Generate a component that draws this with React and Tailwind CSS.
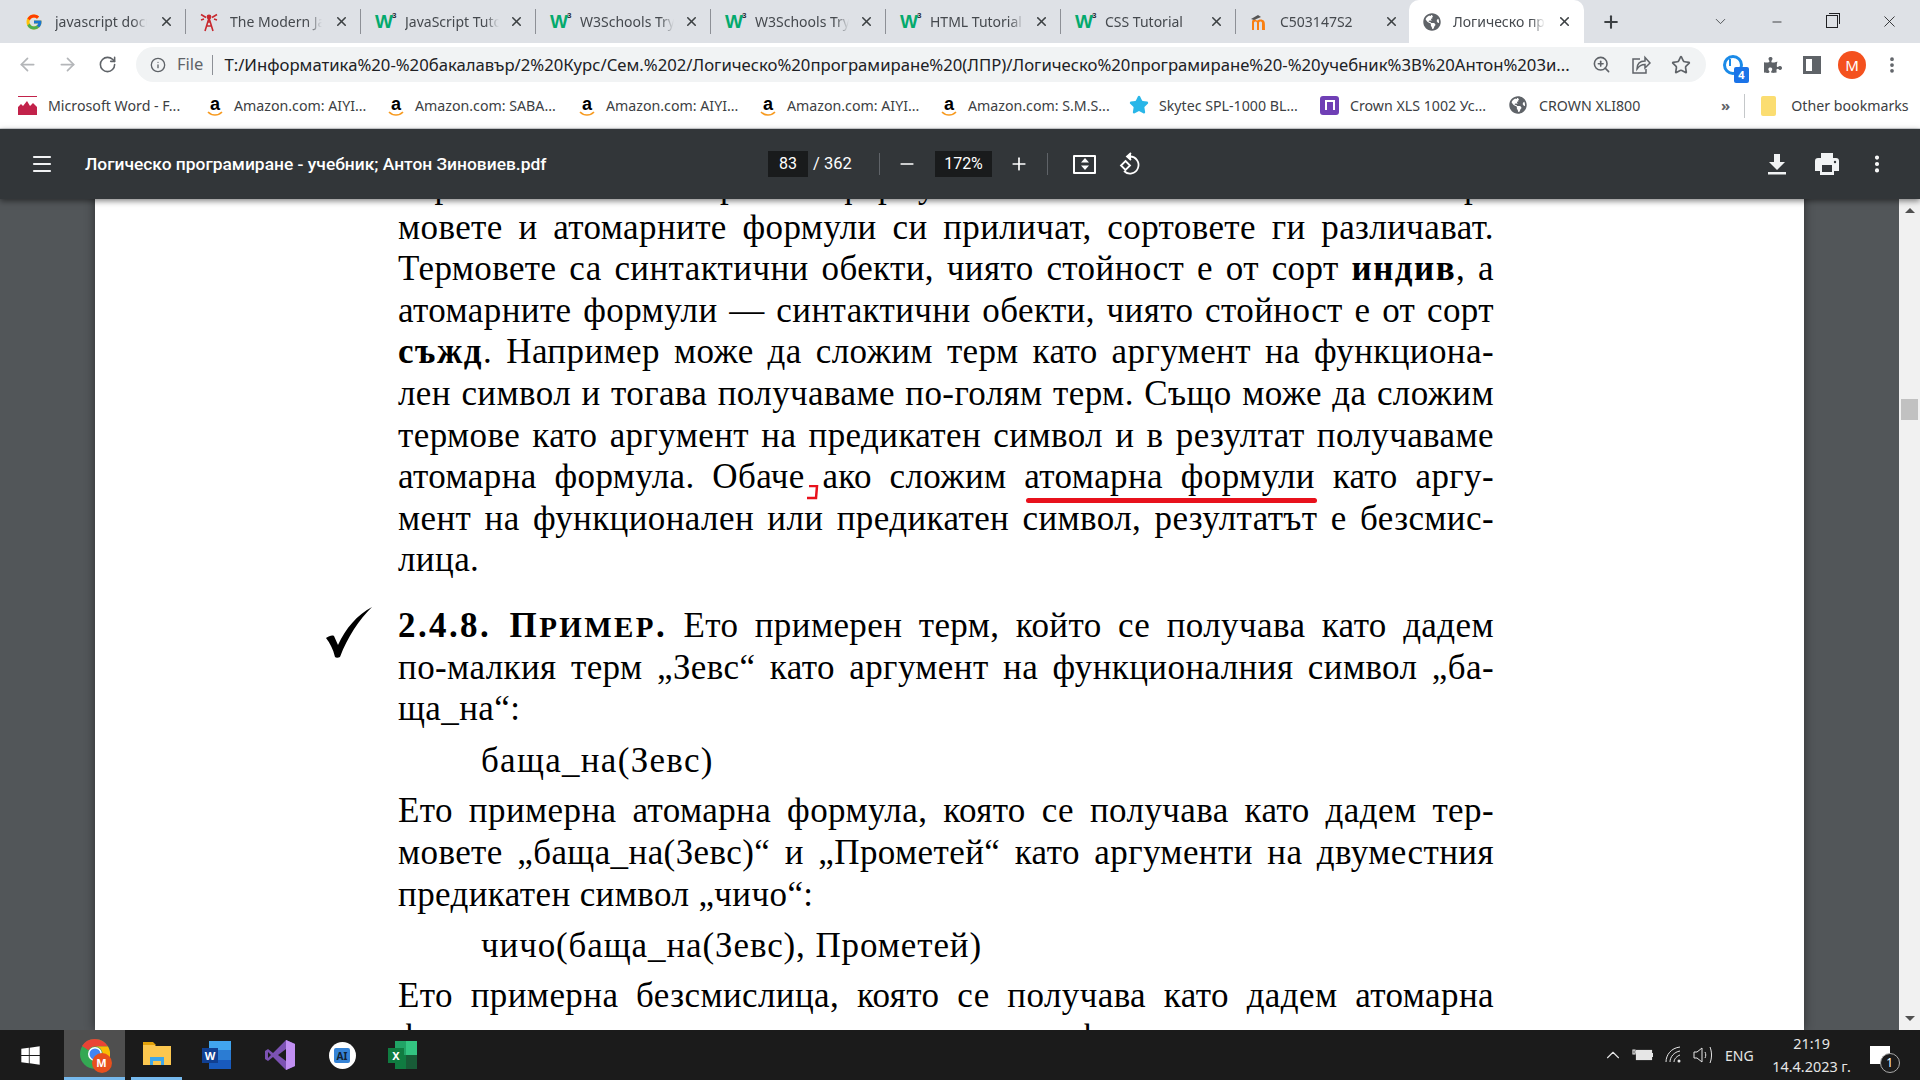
import {
  ArrowLeft,
  ArrowRight,
  RotateCw,
  Info,
  ZoomIn,
  Star,
  Plus,
  Minus,
  X,
  ChevronDown,
  ChevronUp,
  Menu,
  EllipsisVertical,
} from 'lucide-react';
import { FcGoogle } from 'react-icons/fc';
import { FaGlobeAmericas, FaPuzzlePiece, FaWindows } from 'react-icons/fa';

function W3() {
  return (
    <span className="relative w-[20px] h-[18px] flex-none font-['Liberation_Sans',sans-serif] font-bold text-[19px] leading-[18px] text-[#04aa6d]">
      W<span className="absolute left-[17px] -top-[2px] text-[8px] leading-[10px] text-[#282a35]">3</span>
    </span>
  );
}

function Tower() {
  return (
    <svg width="18" height="20" viewBox="0 0 18 20" fill="none" stroke="#c8282e" strokeWidth="1.6" className="flex-none">
      <path d="M9 6 5 19M9 6l4 13M6.500 14h5M7.500 10h3M1 2.500l5 3M17 2.500l-5 3M1 8l3-1M17 8l-3-1" />
      <circle cx="9" cy="5" r="1.6" fill="#c8282e" />
    </svg>
  );
}

function Moodle() {
  return (
    <svg width="20" height="18" viewBox="0 0 20 18" className="flex-none">
      <path d="M2 17V9c0-3 4-3 5-1 1-2 6-2 7 0 1 1 1 3 1 9h-3v-7c0-2-3-2-3 0v7H7v-7c0-2-3-2-3 0v7Z" fill="#f98012" />
      <path d="M1 6 8 2l3 2-7 3Z" fill="#555" />
    </svg>
  );
}

const tabs = [
  { title: 'javascript docu', icon: <FcGoogle size={18} />, gap: 'gap-[12px]' },
  { title: 'The Modern Ja', icon: <Tower />, gap: 'gap-[12px]' },
  { title: 'JavaScript Tuto', icon: <W3 />, gap: 'gap-[10px]' },
  { title: 'W3Schools Try', icon: <W3 />, gap: 'gap-[10px]' },
  { title: 'W3Schools Try', icon: <W3 />, gap: 'gap-[10px]' },
  { title: 'HTML Tutorial', icon: <W3 />, gap: 'gap-[10px]' },
  { title: 'CSS Tutorial', icon: <W3 />, gap: 'gap-[10px]' },
  { title: 'C503147S2', icon: <Moodle />, gap: 'gap-[10px]' },
];

function GreyGlobe() {
  return <FaGlobeAmericas size={18} className="flex-none text-[#5f6368]" />;
}

function Tab({ title, icon, active, gap }) {
  return (
    <div className={`w-[175px] h-[43px] flex-none flex items-center pl-[14px] pr-[12px] relative ${gap || 'gap-[10px]'} ${active ? 'bg-white rounded-t-[10px]' : ''}`}>
      {icon}
      <span className="flex-1 overflow-hidden whitespace-nowrap text-[14px] text-[#45494e] [mask-image:linear-gradient(to_left,transparent,black_14px)]">{title}</span>
      <X size={15} strokeWidth={2.5} className="text-[#3c4043] flex-none" />
      {!active && <span className="absolute right-0 top-[9px] w-px h-[25px] bg-[#8d9096]" />}
    </div>
  );
}

function TabStrip() {
  return (
    <div className="h-[43px] bg-[#dee1e6] flex items-center pl-[11px]">
      {tabs.map((t, i) => (
        <Tab key={i} title={t.title} icon={t.icon} gap={t.gap} />
      ))}
      <div className="-ml-[2px]">
        <Tab active title="Логическо пр" icon={<GreyGlobe />} gap="gap-[12px]" />
      </div>
      <Plus size={20} strokeWidth={2.5} className="ml-[17px] text-[#3c4043]" />
      <ChevronDown size={17} strokeWidth={1.2} className="ml-[91px] text-[#3c4043]" />
      <Minus size={14} strokeWidth={1.4} className="ml-[41px] text-[#202124]" />
      <div className="ml-[42px] w-[12px] h-[13px] border border-[#202124] relative">
        <span className="absolute -right-[3px] -top-[3px] w-[11px] h-[11px] border-t border-r border-[#202124]" />
      </div>
      <X size={19} strokeWidth={1.1} className="ml-[42px] text-[#202124]" />
    </div>
  );
}

function AddressBar() {
  return (
    <div className="h-[43px] bg-white flex items-center pl-[17px]">
      <ArrowLeft size={21} strokeWidth={2} className="text-[#b4b6b9]" />
      <ArrowRight size={21} strokeWidth={2} className="ml-[19px] text-[#b4b6b9]" />
      <RotateCw size={19} strokeWidth={2} className="ml-[20px] text-[#5f6368]" />
      <div className="ml-[19px] w-[1570px] h-[35px] rounded-full bg-[#f1f3f4] flex items-center pl-[14px]">
        <Info size={16} strokeWidth={2} className="text-[#5f6368] flex-none" />
        <span className="ml-[11px] text-[16.5px] text-[#5f6368]">File</span>
        <span className="ml-[9px] w-px h-[20px] bg-[#8d9096]" />
        <span className="ml-[11px] w-[1348px] overflow-hidden whitespace-nowrap text-[16.7px] text-[#202124] flex-none">
          T:/Информатика%20-%20бакалавър/2%20Курс/Сем.%202/Логическо%20програмиране%20(ЛПР)/Логическо%20програмиране%20-%20учебник%3B%20Антон%203и...
        </span>
        <ZoomIn size={19} strokeWidth={2} className="ml-[20px] text-[#5f6368] flex-none" />
        <svg width="20" height="20" viewBox="0 0 20 20" fill="none" stroke="#5f6368" strokeWidth="1.5" className="ml-[20px] flex-none">
          <path d="M9 4H2v14h13v-4" />
          <path d="M6 14c0-5 3-8 8-8V2.500L19 8l-5 5V9.500c-4 0-6 1.500-8 4.500Z" />
        </svg>
        <Star size={20} strokeWidth={2} className="ml-[20px] text-[#5f6368] flex-none" />
      </div>
      <span className="ml-[17px] relative w-[20px] h-[20px] rounded-full border-[3px] border-[#1a8ae8] flex-none">
        <span className="absolute left-[3px] top-[1px] w-[2px] h-[7px] bg-[#1a8ae8]" />
        <span className="absolute left-[8px] top-[9px] w-[15px] h-[16px] rounded-[2px] bg-[#1a73e8] text-white text-[11px] leading-[16px] text-center font-bold">4</span>
      </span>
      <FaPuzzlePiece size={18} className="ml-[21px] text-[#5f6368]" />
      <span className="ml-[21px] w-[18px] h-[18px] border-[3px] border-[#5f6368] border-r-[9px] flex-none" />
      <span className="ml-[17px] w-[28px] h-[28px] rounded-full bg-[#f4511e] text-white text-[15px] leading-[28px] text-center flex-none">M</span>
      <EllipsisVertical size={20} strokeWidth={2.5} className="ml-[16px] text-[#5f6368]" />
    </div>
  );
}

function Bookmark({ icon, label, width, col }) {
  return (
    <div className={`flex items-center flex-none overflow-hidden whitespace-nowrap text-[14.2px] text-[#3c4043] ${width}`}>
      <span className={`${col || 'w-[28px]'} flex-none flex items-center`}>{icon}</span>
      <span>{label}</span>
    </div>
  );
}

function AmazonIcon() {
  return (
    <span className="relative w-[18px] h-[22px] flex-none text-center font-['Liberation_Sans',sans-serif] font-bold text-[18px] leading-[18px] text-black">
      a
      <svg width="16" height="6" viewBox="0 0 16 6" fill="none" stroke="#f79a1f" strokeWidth="1.6" className="absolute left-[1px] top-[16px]">
        <path d="M1 1c4 4 10 4 14 0" />
      </svg>
    </span>
  );
}

function BookmarksBar() {
  return (
    <div className="h-[43px] bg-white border-b border-[#d5d7da] flex items-center pl-[18px] pb-[3px]">
      <Bookmark
        col="w-[30px]"
        width="w-[188px]"
        label="Microsoft Word - F..."
        icon={
          <svg width="19" height="19" viewBox="0 0 19 19">
            <rect width="19" height="19" fill="#c2224a" />
            <path d="M0 0h19v11l-4-4-3 3-3-5-4 5-2-2-3 3Z" fill="#fff" />
            <path d="M0 0h19v1H0Z" fill="#c2224a" />
          </svg>
        }
      />
      <Bookmark width="w-[181px]" label="Amazon.com: AIYI..." icon={<AmazonIcon />} />
      <Bookmark width="w-[191px]" label="Amazon.com: SABA..." icon={<AmazonIcon />} />
      <Bookmark width="w-[181px]" label="Amazon.com: AIYI..." icon={<AmazonIcon />} />
      <Bookmark width="w-[181px]" label="Amazon.com: AIYI..." icon={<AmazonIcon />} />
      <Bookmark width="w-[189px]" label="Amazon.com: S.M.S..." icon={<AmazonIcon />} />
      <Bookmark col="w-[30px]" width="w-[191px]" label="Skytec SPL-1000 BL..." icon={<Star size={20} fill="#29b6e8" className="text-[#29b6e8]" />} />
      <Bookmark
        col="w-[30px]"
        width="w-[189px]"
        label="Crown XLS 1002 Ус..."
        icon={
          <span className="w-[19px] h-[19px] rounded-[3px] bg-[#6f3fb5] flex items-center justify-center">
            <span className="w-[10px] h-[10px] border-2 border-white border-b-0" />
          </span>
        }
      />
      <Bookmark col="w-[30px]" width="w-[212px]" label="CROWN XLI800" icon={<GreyGlobe />} />
      <span className="text-[15px] text-[#5f6368] font-bold">»</span>
      <span className="ml-[14px] w-px h-[24px] bg-[#c4c7c9]" />
      <span className="ml-[16px] w-[15px] h-[20px] rounded-[2px] bg-[#fbdd71] flex-none" />
      <span className="ml-[15px] text-[14.2px] text-[#3c4043] whitespace-nowrap">Other bookmarks</span>
    </div>
  );
}

function ViewerBar() {
  return (
    <div className="h-[70px] bg-[#323639] flex items-center pl-[30px] text-white relative z-10 shadow-[0_2px_6px_rgba(0,0,0,0.5)] font-['Roboto',sans-serif]">
      <Menu size={24} strokeWidth={2.2} className="text-[#f1f3f4] flex-none" />
      <span className="ml-[31px] w-[683px] flex-none text-[17.4px] font-medium whitespace-nowrap">Логическо програмиране - учебник; Антон Зиновиев.pdf</span>
      <span className="w-[40px] h-[26px] bg-[#191b1c] text-[16px] leading-[26px] text-center flex-none">83</span>
      <span className="ml-[5px] w-[66px] flex-none text-[16.5px] whitespace-nowrap">/ 362</span>
      <span className="w-px h-[22px] bg-[#5f6368]" />
      <Minus size={20} strokeWidth={2} className="ml-[17px]" />
      <span className="ml-[18px] w-[57px] h-[26px] bg-[#191b1c] text-[16px] leading-[26px] text-center flex-none">172%</span>
      <Plus size={20} strokeWidth={2} className="ml-[17px]" />
      <span className="ml-[18px] w-px h-[22px] bg-[#5f6368]" />
      <span className="ml-[25px] w-[23px] h-[19px] border-2 border-white rounded-[1px] flex flex-col items-center justify-center flex-none">
        <svg width="8" height="12" viewBox="0 0 8 12" fill="#fff">
          <path d="M4 0 8 4.500H0ZM4 12 0 7.500h8Z" />
        </svg>
      </span>
      <svg width="24" height="24" viewBox="0 0 24 24" fill="none" stroke="#fff" strokeWidth="1.800" className="ml-[22px] flex-none">
        <path d="M10 4.500h2a8.500 8.500 0 1 1-6 14.500" />
        <path d="M13 1 9 4.500 13 8" fill="#fff" />
        <path d="M7.500 9 12 13.500 7.500 18 3 13.500Z" />
      </svg>
      <svg width="22" height="22" viewBox="0 0 22 22" fill="#f1f3f4" className="ml-[624px] flex-none">
        <path d="M8 1h6v8h5l-8 8-8-8h5Z" />
        <rect x="2" y="19" width="18" height="2.500" />
      </svg>
      <svg width="24" height="22" viewBox="0 0 24 22" className="ml-[27px] flex-none">
        <path d="M6 0h12v5H6ZM3 5h18a3 3 0 0 1 3 3v10h-5v4H5v-4H0V8a3 3 0 0 1 3-3Z" fill="#f1f3f4" />
        <rect x="7" y="12" width="10" height="7" fill="#323639" />
        <circle cx="20" cy="9" r="1.200" fill="#323639" />
      </svg>
      <EllipsisVertical size={22} strokeWidth={2.5} className="ml-[27px]" />
    </div>
  );
}

function Line({ children, last }) {
  return (
    <div className={`h-[41.6px] leading-[41.6px] ${last ? 'text-left' : 'text-justify [text-align-last:justify]'}`}>
      {children}
    </div>
  );
}

function PdfPage() {
  return (
    <div className="w-[1709px] flex-none -mt-[34px] bg-white pl-[303px] pr-[310px] text-[35px] tracking-[0.4px] text-black font-['Liberation_Serif',serif] shadow-[0_0_10px_rgba(0,0,0,0.45)]">
      <Line>Термовете и атомарните формули са синтактични обекти. Тер-</Line>
      <Line>мовете и атомарните формули си приличат, сортовете ги различават.</Line>
      <Line>
        Термовете са синтактични обекти, чиято стойност е от сорт <b className="tracking-[1.5px]">индив</b>, а
      </Line>
      <Line>атомарните формули — синтактични обекти, чиято стойност е от сорт</Line>
      <Line>
        <b className="tracking-[1.5px]">съжд</b>. Например може да сложим терм като аргумент на функциона-
      </Line>
      <Line>лен символ и тогава получаваме по-голям терм. Също може да сложим</Line>
      <Line>термове като аргумент на предикатен символ и в резултат получаваме</Line>
      <Line>
        атомарна формула. Обаче
        <span className="relative">
          <svg width="13" height="15" viewBox="0 0 13 15" fill="none" stroke="#e8111c" strokeWidth="2.500" className="absolute left-[1px] top-[28px]">
            <path d="M3 1h8l-1 12H1" />
          </svg>
        </span>{' '}
        ако сложим{' '}
        <span className="relative">
          атомарна формули
          <span className="absolute left-[2px] -right-[2px] -bottom-[7px] h-[5px] rounded-full bg-[#e8111c]" />
        </span>{' '}
        като аргу-
      </Line>
      <Line>мент на функционален или предикатен символ, резултатът е безсмис-</Line>
      <Line last>лица.</Line>
      <div className="relative mt-[24px]">
        <svg width="48" height="52" viewBox="0 0 48 52" className="absolute -left-[73px] top-[1px]">
          <path d="M1 32c3-2 6-3 8-2l4 9C21 22 32 9 47 1 34 14 23 30 15 51c-2 1-4 1-5 0C8 43 5 37 1 32Z" fill="#000" />
        </svg>
        <Line>
          <b className="tracking-[2.4px]">
            2.4.8. П<span className="text-[29px]">РИМЕР</span>.
          </b>{' '}
          Ето примерен терм, който се получава като дадем
        </Line>
      </div>
      <Line>по-малкия терм „Зевс“ като аргумент на функционалния символ „ба-</Line>
      <Line last>ща_на“:</Line>
      <div className="mt-[10px] ml-[83px] tracking-[1.300px]">
        <Line last>баща_на(Зевс)</Line>
      </div>
      <div className="mt-[9px]">
        <Line>Ето примерна атомарна формула, която се получава като дадем тер-</Line>
      </div>
      <Line>мовете „баща_на(Зевс)“ и „Прометей“ като аргументи на двуместния</Line>
      <Line last>предикатен символ „чичо“:</Line>
      <div className="mt-[10px] ml-[83px] tracking-[0.9px]">
        <Line last>чичо(баща_на(Зевс), Прометей)</Line>
      </div>
      <div className="mt-[8px]">
        <Line>Ето примерна безсмислица, която се получава като дадем атомарна</Line>
      </div>
      <Line>формула като аргумент на функционален символ:</Line>
    </div>
  );
}

function Scrollbar() {
  return (
    <div className="w-[21px] flex-none bg-[#f1f1f1] flex flex-col items-center relative">
      <span className="mt-[9px] w-0 h-0 border-l-[5px] border-r-[5px] border-b-[5px] border-l-transparent border-r-transparent border-b-[#505050]" />
      <span className="mt-[186px] w-[17px] h-[21px] bg-[#c1c1c1]" />
      <span className="mt-auto mb-[9px] w-0 h-0 border-l-[5px] border-r-[5px] border-t-[5px] border-l-transparent border-r-transparent border-t-[#505050]" />
    </div>
  );
}

function ChromeIcon() {
  return (
    <span className="relative w-[30px] h-[30px] flex-none">
      <svg width="30" height="30" viewBox="0 0 30 30">
        <circle cx="15" cy="15" r="15" fill="#34a853" />
        <path d="M15 0a15 15 0 0 1 13 7.500H15a7.500 7.500 0 0 0-6.500 3.800L2 7A15 15 0 0 1 15 0Z" fill="#ea4335" />
        <path d="M28 7.500A15 15 0 0 1 15 30l6.500-11.200A7.500 7.500 0 0 0 15 7.500Z" fill="#fbbc04" />
        <circle cx="15" cy="15" r="7" fill="#fff" />
        <circle cx="15" cy="15" r="5.500" fill="#4285f4" />
      </svg>
      <span className="absolute left-[12px] top-[14px] w-[20px] h-[20px] rounded-full bg-[#e8501d] text-white text-[11px] leading-[20px] text-center font-bold">M</span>
    </span>
  );
}

function Taskbar() {
  return (
    <div className="h-[50px] flex-none bg-[#1b1b1b] flex items-center text-white font-['Noto_Sans',sans-serif]">
      <div className="w-[60px] flex justify-center">
        <FaWindows size={21} />
      </div>
      <div className="ml-[4px] w-[61px] h-full bg-[#4f4f4f] border-b-[3px] border-[#76b9ed] flex items-center justify-center">
        <ChromeIcon />
      </div>
      <div className="ml-[6px] w-[51px] h-full border-b-[3px] border-[#76b9ed] flex items-center justify-center">
        <svg width="28" height="26" viewBox="0 0 28 26">
          <path d="M0 2h10l3 3h15v19H0Z" fill="#fcc74f" />
          <path d="M0 1h10l3 3H0Z" fill="#e3a20a" />
          <path d="M7 16h14v8h-3v-4h-8v4H7Z" fill="#3fa7e8" />
        </svg>
      </div>
      <div className="ml-[15px] w-[40px] flex justify-center">
        <span className="relative w-[30px] h-[28px]">
          <span className="absolute left-[7px] top-0 w-[22px] h-[28px] flex flex-col">
            <span className="flex-1 bg-[#41a5ee]" />
            <span className="flex-1 bg-[#2b7cd3]" />
            <span className="flex-1 bg-[#185abd]" />
          </span>
          <span className="absolute left-0 top-[7px] w-[16px] h-[15px] bg-[#103f91] text-[11px] leading-[15px] text-center font-bold">W</span>
        </span>
      </div>
      <div className="ml-[23px] w-[40px] flex justify-center">
        <svg width="30" height="30" viewBox="0 0 30 30">
          <path d="M21 0 30 4v22l-9 4L8 17l-5 4-3-2V11l3-2 5 4Z" fill="#7c52b3" />
          <path d="M21 0 30 4v22l-9 4Z" fill="#c18ff2" />
          <path d="M21 9v12l-8-6Z" fill="#1b1b1b" />
          <path d="M3 12v6l3-3Z" fill="#1b1b1b" />
        </svg>
      </div>
      <div className="ml-[22px] w-[40px] flex justify-center">
        <span className="w-[27px] h-[27px] rounded-full bg-white flex items-center justify-center">
          <span className="w-[16px] h-[15px] rounded-[2px] bg-[#3583d6] text-[10px] leading-[17px] text-center font-bold text-[#123]">AI</span>
        </span>
      </div>
      <div className="ml-[21px] w-[40px] flex justify-center">
        <span className="relative w-[30px] h-[28px]">
          <span className="absolute left-[7px] top-0 w-[22px] h-[28px] grid grid-cols-2">
            <span className="bg-[#21a366]" />
            <span className="bg-[#33c481]" />
            <span className="bg-[#107c41]" />
            <span className="bg-[#185c37]" />
          </span>
          <span className="absolute left-0 top-[7px] w-[16px] h-[15px] bg-[#107c41] text-[11px] leading-[15px] text-center font-bold">X</span>
        </span>
      </div>
      <ChevronUp size={22} strokeWidth={1.200} className="ml-[1179px] text-[#e6e6e6]" />
      <svg width="22" height="14" viewBox="0 0 22 14" fill="none" stroke="#e6e6e6" strokeWidth="1.200" className="ml-[8px] flex-none">
        <path d="M1 2h2v4H1ZM3 4h2" />
        <rect x="4.500" y="2.500" width="15" height="9" />
        <rect x="5.500" y="3.500" width="13" height="7" fill="#e6e6e6" />
        <path d="M20 5v4" strokeWidth="2" />
      </svg>
      <svg width="18" height="18" viewBox="0 0 18 18" fill="none" stroke="#e6e6e6" strokeWidth="1" className="ml-[11px] flex-none">
        <path d="M1 16C1 9 6 2 15 1M5 16C5 11 9 6 15 5M9 16c0-3 3-6 6-7" />
        <circle cx="14" cy="15" r="1.500" fill="#e6e6e6" stroke="none" />
      </svg>
      <svg width="20" height="18" viewBox="0 0 20 18" fill="none" stroke="#e6e6e6" strokeWidth="1" className="ml-[10px] flex-none">
        <path d="M1 6h3l5-4v14l-5-4H1Z" />
        <path d="M12 6c1 2 1 4 0 6M17 1c2 5 2 11 0 16" />
      </svg>
      <span className="ml-[12px] text-[14px] text-[#e6e6e6]">ENG</span>
      <div className="ml-[13px] w-[90px] text-center text-[14.400px] leading-[23px] text-[#e6e6e6]">
        <div>21:19</div>
        <div>14.4.2023 г.</div>
      </div>
      <span className="ml-[13px] relative w-[20px] h-[18px] bg-white flex-none">
        <span className="absolute left-[10px] top-[7px] w-[20px] h-[20px] rounded-full bg-[#1b1b1b] border border-[#aaa] text-[12px] leading-[18px] text-center">1</span>
      </span>
    </div>
  );
}

export default function App() {
  return (
    <div className="w-[1920px] h-[1080px] flex flex-col overflow-hidden font-['Noto_Sans',sans-serif]">
      <TabStrip />
      <AddressBar />
      <BookmarksBar />
      <ViewerBar />
      <div className="flex-1 min-h-0 flex overflow-hidden bg-[#525659]">
        <div className="flex-1 flex justify-center overflow-hidden">
          <PdfPage />
        </div>
        <Scrollbar />
      </div>
      <Taskbar />
    </div>
  );
}
